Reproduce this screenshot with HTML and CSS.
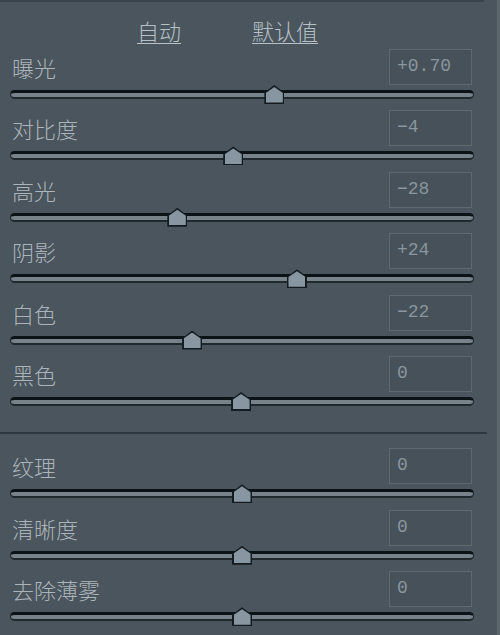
FILE: index.html
```html
<!DOCTYPE html>
<html lang="zh">
<head>
<meta charset="utf-8">
<title>基本</title>
<link rel="stylesheet" href="styles.css">
</head>
<body>
<div class="panel">
  <div class="topline"></div>
  <div class="header">
    <a class="link" href="#">自动</a>
    <a class="link" href="#">默认值</a>
  </div>
  <div class="group">
    <div class="row">
      <div class="head"><span class="label">曝光</span><span class="value">+0.70</span></div>
      <div class="track"><span class="thumb" style="left:57.0%"></span></div>
    </div>
    <div class="row">
      <div class="head"><span class="label">对比度</span><span class="value">−4</span></div>
      <div class="track"><span class="thumb" style="left:48.1%"></span></div>
    </div>
    <div class="row">
      <div class="head"><span class="label">高光</span><span class="value">−28</span></div>
      <div class="track"><span class="thumb" style="left:36.0%"></span></div>
    </div>
    <div class="row">
      <div class="head"><span class="label">阴影</span><span class="value">+24</span></div>
      <div class="track"><span class="thumb" style="left:61.9%"></span></div>
    </div>
    <div class="row">
      <div class="head"><span class="label">白色</span><span class="value">−22</span></div>
      <div class="track"><span class="thumb" style="left:39.2%"></span></div>
    </div>
    <div class="row">
      <div class="head"><span class="label">黑色</span><span class="value">0</span></div>
      <div class="track"><span class="thumb" style="left:49.8%"></span></div>
    </div>
  </div>
  <div class="divider"></div>
  <div class="group">
    <div class="row">
      <div class="head"><span class="label">纹理</span><span class="value">0</span></div>
      <div class="track"><span class="thumb" style="left:50%"></span></div>
    </div>
    <div class="row">
      <div class="head"><span class="label">清晰度</span><span class="value">0</span></div>
      <div class="track"><span class="thumb" style="left:50%"></span></div>
    </div>
    <div class="row">
      <div class="head"><span class="label">去除薄雾</span><span class="value">0</span></div>
      <div class="track"><span class="thumb" style="left:50%"></span></div>
    </div>
  </div>
</div>
</body>
</html>
```
FILE: styles.css
```css
html, body {
  margin: 0;
  padding: 0;
  background: #4a555d;
}
.panel {
  width: 500px;
  height: 635px;
  box-sizing: border-box;
  border-right: 3px solid #5b666d;
  background: #4a555d;
  overflow: hidden;
  font-family: "Noto Sans CJK SC", "Noto Sans", sans-serif;
}
.topline {
  height: 2px;
  width: 484px;
  background: #3a444b;
}
.header {
  height: 47px;
  box-sizing: border-box;
  padding: 15px 0 0 137px;
  display: flex;
  gap: 71px;
}
.link {
  color: #b6c0c6;
  font-size: 22px;
  font-weight: 300;
  line-height: 26px;
  text-decoration: underline;
  text-underline-offset: 3px;
  text-decoration-thickness: 1px;
}
.row {
  height: 61.4px;
}
.head {
  height: 36px;
  display: flex;
  align-items: center;
  justify-content: space-between;
  padding: 0 25px 0 12px;
}
.label {
  color: #aab4ba;
  font-size: 22px;
  font-weight: 300;
  line-height: 26px;
}
.value {
  width: 83px;
  height: 36px;
  box-sizing: border-box;
  border: 1px solid #5e6970;
  background: #46515a;
  color: #8a959d;
  font-family: "Liberation Mono", "DejaVu Sans Mono", monospace;
  font-size: 18px;
  line-height: 32px;
  padding-left: 7px;
}
.track {
  position: relative;
  margin: 5px 0 0 10px;
  width: 464px;
  height: 9px;
  box-sizing: border-box;
  border-radius: 4.5px;
  background: #77828a;
  border: 1px solid #1a2227;
  border-top: 3px solid #0b1317;
  border-bottom: 2px solid #20292e;
}
.thumb {
  position: absolute;
  top: -8px;
  width: 20px;
  height: 19px;
  margin-left: -10px;
  background: #141c21;
  clip-path: polygon(50% 0, 100% 40%, 100% 100%, 0 100%, 0 40%);
}
.thumb::after {
  content: "";
  position: absolute;
  left: 1.5px;
  top: 2px;
  right: 1.5px;
  bottom: 1.5px;
  background: #8796a0;
  clip-path: polygon(50% 0, 100% 38%, 100% 100%, 0 100%, 0 38%);
}
.divider {
  margin: 15px 0 14px 0;
  width: 487px;
  height: 2px;
  background: #2f383e;
}
```
